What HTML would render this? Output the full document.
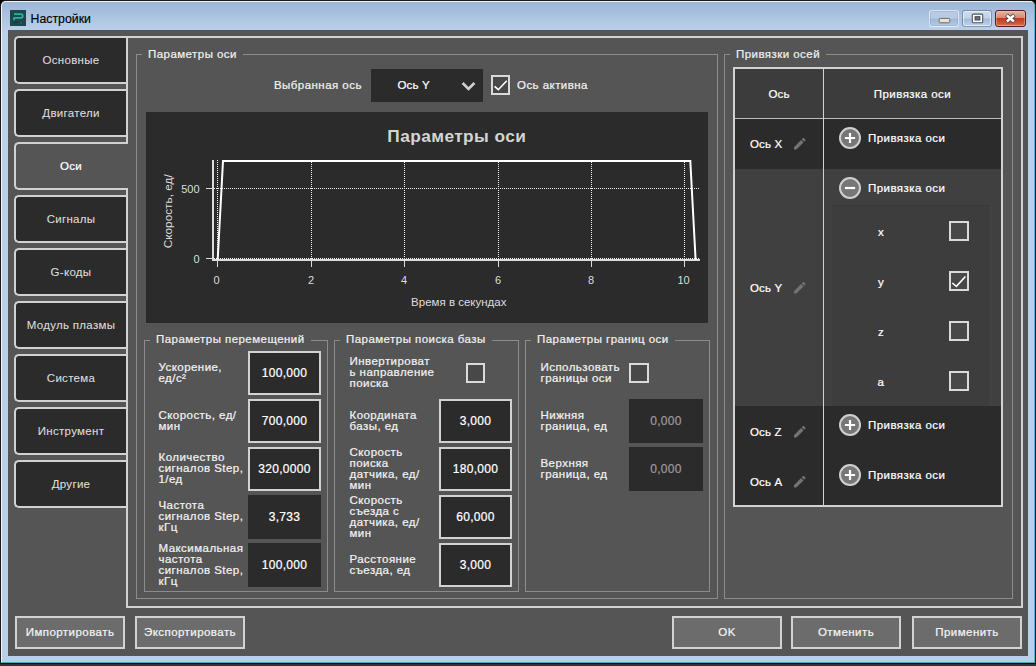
<!DOCTYPE html>
<html lang="ru"><head><meta charset="utf-8"><title>Настройки</title>
<style>
*{box-sizing:border-box;margin:0;padding:0}
html,body{width:1036px;height:666px;overflow:hidden;background:#000}
body{font-family:"Liberation Sans",sans-serif;font-size:11.5px;letter-spacing:.45px;color:#e8e8e8;position:relative;-webkit-text-stroke:.22px currentColor}
.abs,.abs *{position:absolute}
#win{position:absolute;left:0;top:0;width:1036px;height:664px;background:linear-gradient(#9db5d4 0px,#a8c0df 12px,#bbd0ea 30px,#bad0ea 100%);border-radius:6px 6px 0 0;border:1px solid #1a1a1a;border-bottom-color:#0a0a0a}
#win:before{content:"";position:absolute;left:0;top:0;right:0;bottom:0;border:1px solid rgba(255,255,255,.8);border-right-color:#5db4d0;border-bottom-color:#48a8be;border-radius:5px 5px 0 0}
#under{position:absolute;left:0;top:664px;width:1036px;height:2px;background:#333}
#client{position:absolute;left:8px;top:30px;width:1020px;height:626px;background:#555}
#ticon{position:absolute;left:10px;top:10px;width:16px;height:16px}
#title{-webkit-text-stroke:.15px #000;position:absolute;left:30.6px;top:11px;font-size:12.3px;letter-spacing:0;color:#000;line-height:16px;white-space:nowrap}
.wb{position:absolute;top:10px;height:17px;width:30px;border-radius:3px;border:1px solid rgba(70,90,120,.55);box-shadow:inset 0 0 0 1px rgba(255,255,255,.55);background:linear-gradient(rgba(255,255,255,.45),rgba(255,255,255,.25) 48%,rgba(140,170,205,.35) 52%,rgba(200,220,240,.4))}
.tab{-webkit-text-stroke:.1px currentColor;letter-spacing:.3px;position:absolute;left:14px;width:112px;height:48px;border:2px solid #d2d2d2;border-right:none;border-radius:5px 0 0 5px;background:#2b2b2b;color:#dcdcdc;text-align:center;line-height:45px;white-space:nowrap}
.tab.sel{background:#555;color:#fff;width:114px;padding-right:2px;-webkit-text-stroke:.22px currentColor}
#panel{position:absolute;left:126px;top:36px;width:897px;height:572px;border:2px solid #d2d2d2}
.gb{position:absolute;border:1px solid #8c8c8c}
.gb.sub>.t{top:-9px}
.gb>.t{position:absolute;top:-8px;left:5px;padding:0 6px 0 6px;background:#555;line-height:14px;white-space:nowrap;color:#f0f0f0}
.lbl{position:absolute;white-space:nowrap;line-height:14px;color:#f2f2f2}
.ml.l3{margin-top:-1px}
.tx{letter-spacing:.15px}
.ml{position:absolute;line-height:11px;margin-top:0;margin-left:.5px;white-space:nowrap;color:#f2f2f2;display:flex;flex-direction:column;justify-content:center}
.inp{position:absolute;width:73px;height:44px;background:#2b2b2b;border:2px solid #d2d2d2;color:#fff;text-align:center;line-height:40px;font-size:12px;letter-spacing:.3px}
.inp.ro{border:none;line-height:44px}
.inp.dis{border:none;line-height:44px;color:#9a9a9a}
.cb{position:absolute;width:20px;height:20px;border:2px solid #dadada;background:#484848}
.btn{position:absolute;top:616px;width:110px;height:33px;border:2px solid #d2d2d2;background:#6c6c6c;color:#f4f4f4;text-align:center;line-height:28px;white-space:nowrap}
</style></head><body>
<div id="win"></div>
<div id="under"></div>
<svg id="ticon" width="16" height="16" viewBox="0 0 16 16"><rect width="16" height="16" fill="#1d484b"/><path d="M4 4.1 H10.8 Q12.7 4.1 12.7 6.0 Q12.7 7.9 10.8 7.9 H4 V10.3" fill="none" stroke="#27b3a4" stroke-width="1.8" stroke-linejoin="round"/><path d="M4 12.4 H8.5 M9.8 12.9 L11.8 12.2" stroke="#163a3c" stroke-width="1.2" fill="none"/><path d="M10.2 13.1 L12 12.6" stroke="#2a9d92" stroke-width="0.8" fill="none"/></svg>
<div id="title">Настройки</div>
<div class="wb" style="left:929px;border-color:rgba(255,255,255,.55);box-shadow:inset 0 0 0 1px rgba(110,140,180,.25);background:linear-gradient(rgba(255,255,255,.22),rgba(255,255,255,.12) 48%,rgba(120,155,200,.30) 52%,rgba(170,195,225,.25))"></div>
<svg style="position:absolute;left:938px;top:17px" width="13" height="7" viewBox="0 0 13 7"><rect x="1.2" y="1.4" width="10.6" height="4.4" rx="1" fill="#ece0d2" stroke="#6c6c70" stroke-width="1"/></svg>
<div class="wb" style="left:962px"></div>
<svg style="position:absolute;left:971px;top:13px" width="13" height="11" viewBox="0 0 13 11"><rect x="1.3" y="1.1" width="10.4" height="8.6" rx="1" fill="#fbfbfb" stroke="#4e5560" stroke-width="1.1"/><rect x="4.1" y="3.7" width="4.8" height="3.3" fill="#6a7482" stroke="#3f4650" stroke-width="1"/></svg>
<div class="wb" style="left:995px;width:31px;background:linear-gradient(#e7b3a5,#d98872 45%,#c43a1e 50%,#cf5a3d 85%,#d8775a);border-color:#53201c;box-shadow:inset 0 0 0 1px rgba(255,200,180,.45)"></div>
<svg style="position:absolute;left:1003px;top:12px" width="15" height="13" viewBox="0 0 15 13"><path d="M3.5 3 L11.3 9.8 M11.3 3 L3.5 9.8" stroke="#50454c" stroke-width="4.2" stroke-linecap="butt" fill="none"/><path d="M3.9 3.35 L10.9 9.45 M10.9 3.35 L3.9 9.45" stroke="#fff" stroke-width="2.5" stroke-linecap="butt" fill="none"/></svg>
<div id="client"></div>

<div id="panel"></div>
<div class="tab" style="top:36px">Основные</div>
<div class="tab" style="top:89px">Двигатели</div>
<div class="tab sel" style="top:142px">Оси</div>
<div class="tab" style="top:195px">Сигналы</div>
<div class="tab" style="top:248px">G-коды</div>
<div class="tab" style="top:301px">Модуль плазмы</div>
<div class="tab" style="top:354px">Система</div>
<div class="tab" style="top:407px">Инструмент</div>
<div class="tab" style="top:460px">Другие</div>

<!-- left group -->
<div class="gb" style="left:136px;top:54px;width:582px;height:545px"><span class="t">Параметры оси</span></div>
<div class="lbl" style="left:274px;top:78px">Выбранная ось</div>
<div id="combo" style="position:absolute;left:371px;top:69px;width:112px;height:33px;background:#2b2b2b"></div>
<div class="lbl tx" style="left:397.5px;top:78px;color:#fff">Ось Y</div>
<svg style="position:absolute;left:460px;top:79px" width="17" height="13" viewBox="460 79 17 13"><path d="M462.6 83 L468.5 88.9 L474.4 83" fill="none" stroke="#d0d0d0" stroke-width="2.7"/></svg>
<div class="cb" style="left:491px;top:75px;width:19px"></div>
<svg style="position:absolute;left:491px;top:75px" width="20" height="20" viewBox="0 0 20 20"><path d="M3.6 11.3 L7.3 14.7 L15.8 5.7" fill="none" stroke="#fff" stroke-width="1.6"/></svg>
<div class="lbl" style="left:517px;top:78px">Ось активна</div>

<!-- chart -->
<svg id="chart" style="position:absolute;left:146px;top:112px" width="562" height="211" viewBox="146 112 562 211" font-family="Liberation Sans, sans-serif" letter-spacing="0">
<rect x="146" y="112" width="562" height="211" fill="#2b2b2b"/>
<text x="456.8" y="141.6" text-anchor="middle" font-size="17.3" letter-spacing="0.42" font-weight="bold" fill="#d4d4d4">Параметры оси</text>
<g stroke="#f2f2f2" stroke-width="1" stroke-dasharray="1 1" shape-rendering="crispEdges">
<path d="M217.5 160V259M311.5 160V259M404.5 160V259M498.5 160V259M591.5 160V259M684.5 160V259"/>
<path d="M214 188.5H700M214 258.5H700"/>
</g>
<g stroke="#dcdcdc" shape-rendering="crispEdges">
<path d="M213 160V261" stroke-width="2"/>
<path d="M212 260H700" stroke-width="2"/>
<path d="M206 188.5H212M206 258.5H212M217.5 260V267M311.5 260V267M404.5 260V267M498.5 260V267M591.5 260V267M684.5 260V267" stroke-width="1"/>
</g>
<path d="M217.7 259.5 L223 161 L690.3 161 L695.6 259.5" fill="none" stroke="#fff" stroke-width="2" stroke-linejoin="miter"/>
<g font-size="11" fill="#dedede" text-anchor="middle">
<text x="216.5" y="284">0</text><text x="311" y="284">2</text><text x="404" y="284">4</text><text x="498" y="284">6</text><text x="591" y="284">8</text><text x="683.5" y="284">10</text>
</g>
<g font-size="11" fill="#dedede" text-anchor="end"><text x="199.5" y="193">500</text><text x="199.5" y="263">0</text></g>
<text x="458.8" y="306" text-anchor="middle" font-size="11.5" fill="#dedede">Время в секундах</text>
<text transform="translate(171.8 211.3) rotate(-90)" text-anchor="middle" font-size="11.8" fill="#dedede">Скорость, ед/</text>
</svg>

<!-- gb1 -->
<div class="gb sub" style="left:144px;top:340px;width:184px;height:252px"><span class="t">Параметры перемещений</span></div>
<div class="ml" style="left:158px;top:351px;height:44px"><span>Ускорение,</span><span>ед/с²</span></div>
<div class="inp" style="left:248px;top:351px">100,000</div>
<div class="ml" style="left:158px;top:399px;height:44px"><span>Скорость, ед/</span><span>мин</span></div>
<div class="inp" style="left:248px;top:399px">700,000</div>
<div class="ml l3" style="left:158px;top:447px;height:44px"><span>Количество</span><span>сигналов Step,</span><span>1/ед</span></div>
<div class="inp" style="left:248px;top:447px">320,0000</div>
<div class="ml l3" style="left:158px;top:495px;height:44px"><span>Частота</span><span>сигналов Step,</span><span>кГц</span></div>
<div class="inp ro" style="left:248px;top:495px">3,733</div>
<div class="ml" style="left:158px;top:543px;height:44px"><span>Максимальная</span><span>частота</span><span>сигналов Step,</span><span>кГц</span></div>
<div class="inp ro" style="left:248px;top:543px">100,000</div>

<!-- gb2 -->
<div class="gb sub" style="left:334px;top:340px;width:185px;height:252px"><span class="t">Параметры поиска базы</span></div>
<div class="ml l3" style="left:349px;top:351px;height:44px"><span>Инвертироват</span><span>ь направление</span><span>поиска</span></div>
<div class="cb" style="left:466px;top:363px;width:19px"></div>
<div class="ml" style="left:349px;top:399px;height:44px"><span>Координата</span><span>базы, ед</span></div>
<div class="inp" style="left:439px;top:399px">3,000</div>
<div class="ml" style="left:349px;top:447px;height:44px"><span>Скорость</span><span>поиска</span><span>датчика, ед/</span><span>мин</span></div>
<div class="inp" style="left:439px;top:447px">180,000</div>
<div class="ml" style="left:349px;top:495px;height:44px"><span>Скорость</span><span>съезда с</span><span>датчика, ед/</span><span>мин</span></div>
<div class="inp" style="left:439px;top:495px">60,000</div>
<div class="ml" style="left:349px;top:543px;height:44px"><span>Расстояние</span><span>съезда, ед</span></div>
<div class="inp" style="left:439px;top:543px">3,000</div>

<!-- gb3 -->
<div class="gb sub" style="left:525px;top:340px;width:185px;height:252px"><span class="t">Параметры границ оси</span></div>
<div class="ml" style="left:540px;top:351px;height:44px"><span>Использовать</span><span>границы оси</span></div>
<div class="cb" style="left:629px;top:363px"></div>
<div class="ml" style="left:540px;top:399px;height:44px"><span>Нижняя</span><span>граница, ед</span></div>
<div class="inp dis" style="left:629px;top:399px;width:74px">0,000</div>
<div class="ml" style="left:540px;top:447px;height:44px"><span>Верхняя</span><span>граница, ед</span></div>
<div class="inp dis" style="left:629px;top:447px;width:74px">0,000</div>

<!-- right group -->
<div class="gb" style="left:724px;top:54px;width:289px;height:545px"><span class="t">Привязки осей</span></div>
<div id="tbl" style="position:absolute;left:733px;top:67px;width:270px;height:440px;border:2px solid #d2d2d2;background:#404040"></div>
<div style="position:absolute;left:735px;top:69px;width:266px;height:50px;background:#3c3c3c;border-bottom:1px solid #bdbdbd"></div>
<div style="position:absolute;left:735px;top:119px;width:266px;height:50px;background:#2b2b2b"></div>
<div style="position:absolute;left:735px;top:406px;width:266px;height:99px;background:#2b2b2b"></div>
<div style="position:absolute;left:832px;top:205px;width:159px;height:201px;background:#3d3d3d;border-top:1px solid #393939;border-right:1px solid #454545"></div>
<div style="position:absolute;left:823px;top:69px;width:1px;height:436px;background:#d2d2d2"></div>
<div class="lbl tx" style="left:735px;top:87px;width:88px;text-align:center;color:#fff">Ось</div>
<div class="lbl" style="left:824px;top:87px;width:177px;text-align:center;color:#fff">Привязка оси</div>
<div class="lbl tx" style="left:750px;top:137px;color:#fff">Ось X</div>
<svg style="position:absolute;left:791.8px;top:136px" width="15.5" height="15.5" viewBox="0 0 24 24"><path fill="#737373" d="M3 17.25V21h3.75L17.81 9.94l-3.75-3.75L3 17.25zM20.71 7.04a1 1 0 0 0 0-1.41l-2.34-2.34a1 1 0 0 0-1.41 0l-1.83 1.83 3.75 3.75 1.83-1.83z"/></svg>
<svg style="position:absolute;left:839px;top:127px" width="22" height="22" viewBox="0 0 22 22"><circle cx="11" cy="11" r="10" fill="#777" stroke="#d0d0d0" stroke-width="2"/><path d="M5.9 11H16.1M11 5.9V16.1" stroke="#fff" stroke-width="2.2" fill="none"/></svg>
<div class="lbl" style="left:868px;top:130.5px;color:#fff">Привязка оси</div>
<div class="lbl tx" style="left:750px;top:281px;color:#fff">Ось Y</div>
<svg style="position:absolute;left:791.8px;top:280px" width="15.5" height="15.5" viewBox="0 0 24 24"><path fill="#737373" d="M3 17.25V21h3.75L17.81 9.94l-3.75-3.75L3 17.25zM20.71 7.04a1 1 0 0 0 0-1.41l-2.34-2.34a1 1 0 0 0-1.41 0l-1.83 1.83 3.75 3.75 1.83-1.83z"/></svg>
<svg style="position:absolute;left:839px;top:177px" width="22" height="22" viewBox="0 0 22 22"><circle cx="11" cy="11" r="10" fill="#777" stroke="#d0d0d0" stroke-width="2"/><path d="M5.9 11H16.1" stroke="#fff" stroke-width="2.2" fill="none"/></svg>
<div class="lbl" style="left:868px;top:180.5px;color:#fff">Привязка оси</div>
<div class="lbl tx" style="left:750px;top:424.5px;color:#fff">Ось Z</div>
<svg style="position:absolute;left:791.8px;top:424px" width="15.5" height="15.5" viewBox="0 0 24 24"><path fill="#737373" d="M3 17.25V21h3.75L17.81 9.94l-3.75-3.75L3 17.25zM20.71 7.04a1 1 0 0 0 0-1.41l-2.34-2.34a1 1 0 0 0-1.41 0l-1.83 1.83 3.75 3.75 1.83-1.83z"/></svg>
<svg style="position:absolute;left:839px;top:414px" width="22" height="22" viewBox="0 0 22 22"><circle cx="11" cy="11" r="10" fill="#777" stroke="#d0d0d0" stroke-width="2"/><path d="M5.9 11H16.1M11 5.9V16.1" stroke="#fff" stroke-width="2.2" fill="none"/></svg>
<div class="lbl" style="left:868px;top:417.5px;color:#fff">Привязка оси</div>
<div class="lbl tx" style="left:750px;top:474.5px;color:#fff">Ось A</div>
<svg style="position:absolute;left:791.8px;top:474px" width="15.5" height="15.5" viewBox="0 0 24 24"><path fill="#737373" d="M3 17.25V21h3.75L17.81 9.94l-3.75-3.75L3 17.25zM20.71 7.04a1 1 0 0 0 0-1.41l-2.34-2.34a1 1 0 0 0-1.41 0l-1.83 1.83 3.75 3.75 1.83-1.83z"/></svg>
<svg style="position:absolute;left:839px;top:464px" width="22" height="22" viewBox="0 0 22 22"><circle cx="11" cy="11" r="10" fill="#777" stroke="#d0d0d0" stroke-width="2"/><path d="M5.9 11H16.1M11 5.9V16.1" stroke="#fff" stroke-width="2.2" fill="none"/></svg>
<div class="lbl" style="left:868px;top:467.5px;color:#fff">Привязка оси</div>
<div class="lbl" style="left:871px;top:225px;width:20px;text-align:center;color:#fff">x</div>
<div class="cb" style="left:949px;top:221px"></div>
<div class="lbl" style="left:871px;top:275px;width:20px;text-align:center;color:#fff">y</div>
<div class="cb" style="left:949px;top:271px"></div>
<svg style="position:absolute;left:949px;top:271px" width="20" height="20" viewBox="0 0 20 20"><path d="M3.3 12 L7.4 15.4 L16.4 5.5" fill="none" stroke="#fff" stroke-width="1.6"/></svg>
<div class="lbl" style="left:871px;top:325px;width:20px;text-align:center;color:#fff">z</div>
<div class="cb" style="left:949px;top:321px"></div>
<div class="lbl" style="left:871px;top:375px;width:20px;text-align:center;color:#fff">a</div>
<div class="cb" style="left:949px;top:371px"></div>

<div class="btn" style="left:15px">Импортировать</div>
<div class="btn" style="left:135px">Экспортировать</div>
<div class="btn" style="left:672px">OK</div>
<div class="btn" style="left:791px">Отменить</div>
<div class="btn" style="left:912px">Применить</div>
</body></html>
